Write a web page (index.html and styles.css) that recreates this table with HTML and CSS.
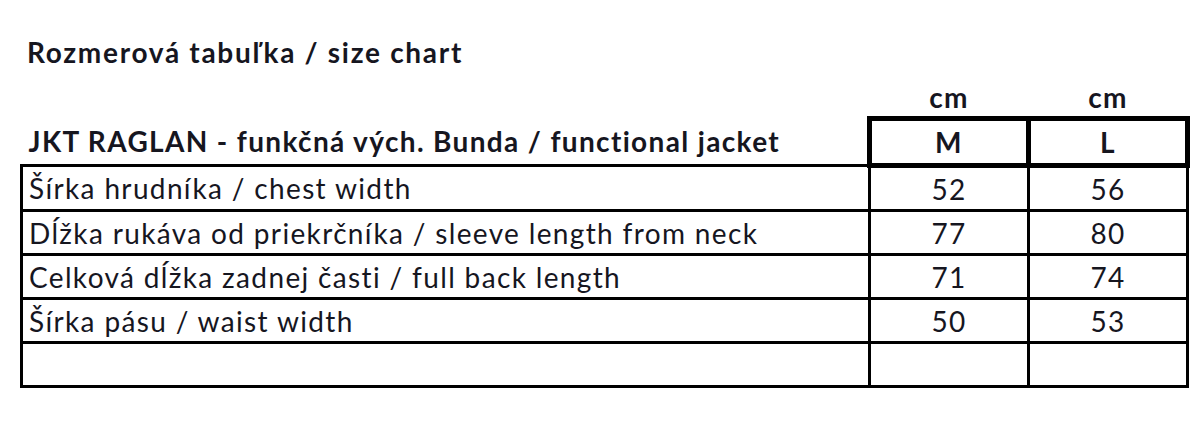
FILE: index.html
```html
<!DOCTYPE html>
<html lang="sk">
<head>
<meta charset="utf-8">
<title>Rozmerová tabuľka</title>
<link rel="stylesheet" href="styles.css">
</head>
<body>
<div class="sheet">
  <h1 class="title">Rozmerová tabuľka / size chart</h1>
  <table class="chart">
    <colgroup>
      <col class="col-label">
      <col class="col-size">
      <col class="col-size">
    </colgroup>
    <thead>
      <tr class="unit-row">
        <th class="blank"></th>
        <th class="unit">cm</th>
        <th class="unit">cm</th>
      </tr>
      <tr class="size-row">
        <th class="product">JKT RAGLAN - funkčná vých. Bunda / functional jacket</th>
        <th class="size">M</th>
        <th class="size">L</th>
      </tr>
    </thead>
    <tbody>
      <tr><td class="label">Šírka hrudníka / chest width</td><td class="num">52</td><td class="num">56</td></tr>
      <tr><td class="label">Dĺžka rukáva od priekrčníka / sleeve length from neck</td><td class="num">77</td><td class="num">80</td></tr>
      <tr><td class="label">Celková dĺžka zadnej časti / full back length</td><td class="num">71</td><td class="num">74</td></tr>
      <tr><td class="label">Šírka pásu / waist width</td><td class="num">50</td><td class="num">53</td></tr>
      <tr><td class="label"></td><td class="num"></td><td class="num"></td></tr>
    </tbody>
  </table>
</div>
</body>
</html>
```

FILE: styles.css
```css
html, body {
  margin: 0;
  padding: 0;
  background: #ffffff;
}

body {
  font-family: Lato, "Open Sans", sans-serif;
  color: #16161f;
}

.sheet {
  padding: 36px 0 0 20px;
}

.title {
  margin: 0 0 10px 7px;
  font-size: 28px;
  line-height: 32px;
  font-weight: 700;
  letter-spacing: 1.7px;
}

.chart {
  border-collapse: collapse;
  table-layout: fixed;
  width: 1166px;
  font-size: 28px;
  letter-spacing: 1.35px;
}

.col-label { width: 848px; }
.col-size { width: 159px; }

.chart th,
.chart td {
  padding: 0;
  vertical-align: middle;
}

.unit-row th {
  height: 38px;
  font-weight: 700;
  text-align: center;
}

.size-row th {
  height: 42px;
  font-weight: 700;
  border-bottom: 3px solid #000;
}

.size-row .product {
  text-align: left;
  padding-left: 7px;
}

.size-row .size {
  text-align: center;
  border: 5px solid #000;
}

.size-row .size + .size {
  border-left: 3px solid #000;
}

.chart tbody td {
  height: 41px;
  border: 3px solid #000;
}

.chart tbody .label {
  text-align: left;
  padding-left: 6px;
}

.chart tbody .num {
  text-align: center;
}
```
